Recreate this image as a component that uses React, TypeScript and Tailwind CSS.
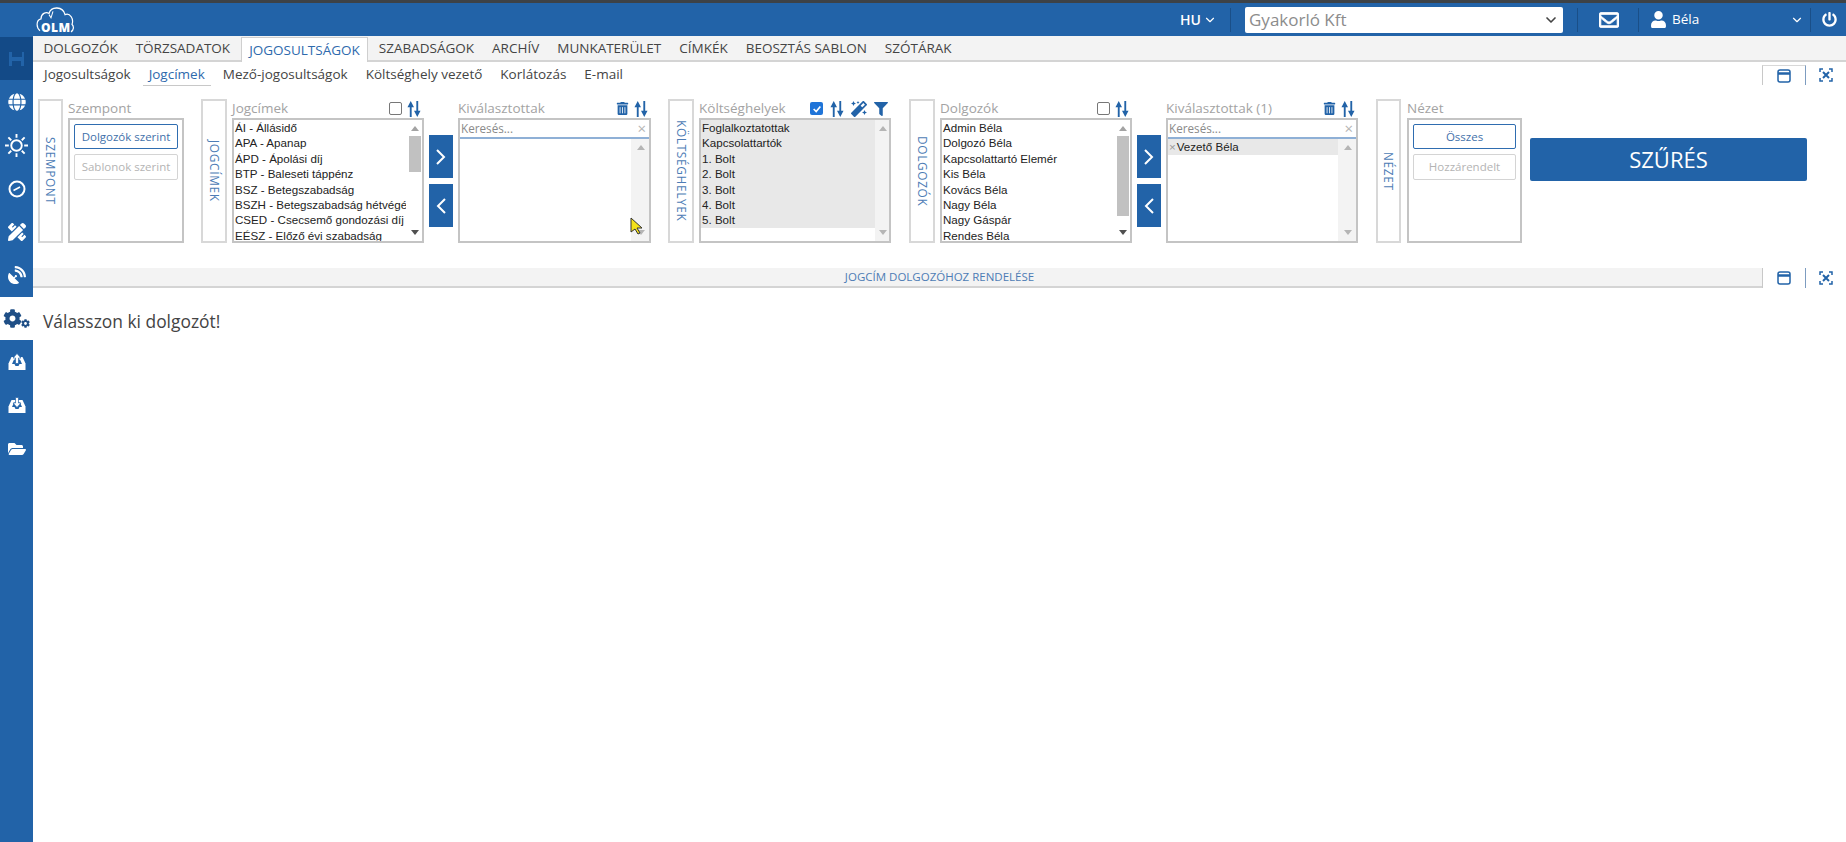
import { FaCog, FaFilter, FaFolderOpen, FaGlobe, FaMagic, FaPencilRuler, FaPowerOff, FaRegEnvelope, FaSatelliteDish, FaTrashAlt, FaUser } from 'react-icons/fa';
import { ChevronDown } from 'lucide-react';
import type { ReactNode } from 'react';

const tabs = ['DOLGOZÓK', 'TÖRZSADATOK', 'JOGOSULTSÁGOK', 'SZABADSÁGOK', 'ARCHÍV', 'MUNKATERÜLET', 'CÍMKÉK', 'BEOSZTÁS SABLON', 'SZÓTÁRAK'];
const subTabs = ['Jogosultságok', 'Jogcímek', 'Mező-jogosultságok', 'Költséghely vezető', 'Korlátozás', 'E-mail'];
const jogcimek = ['ÁI - Állásidő', 'APA - Apanap', 'ÁPD - Ápolási díj', 'BTP - Baleseti táppénz', 'BSZ - Betegszabadság', 'BSZH - Betegszabadság hétvégé', 'CSED - Csecsemő gondozási díj', 'EÉSZ - Előző évi szabadság'];
const koltseg = ['Foglalkoztatottak', 'Kapcsolattartók', '1. Bolt', '2. Bolt', '3. Bolt', '4. Bolt', '5. Bolt'];
const dolgozok = ['Admin Béla', 'Dolgozó Béla', 'Kapcsolattartó Elemér', 'Kis Béla', 'Kovács Béla', 'Nagy Béla', 'Nagy Gáspár', 'Rendes Béla'];

function SortIcon() {
  return (
    <svg viewBox="0 0 15 17" className="w-[14px] h-[16px] text-[#2263a8]" fill="currentColor">
      <path d="M3 6h2v11H3zM4 0l3.500 6.500h-7zM10 0h2v11h-2zM11 17l-3.500-6.500h7z" />
    </svg>
  );
}

function InboxIcon({ up }: { up?: boolean }) {
  return (
    <svg viewBox="0 0 18 18" className="w-[18px] h-[18px]">
      <path d="M3.500 4h11l3 6.500V17H.5v-6.500z" fill="#fff" />
      <path d="M6 6.500h6l2 4.500h-2.500l-1 2h-3l-1-2H4z" fill="#2263a8" />
      {up
        ? <path d="M9 .5l4 4.500h-2.500v5.500h-3V5H5z" fill="#fff" stroke="#2263a8" strokeWidth="0.700" />
        : <path d="M7.500 1.500h3V7H13l-4 4.500L5 7h2.500z" fill="#fff" stroke="#2263a8" strokeWidth="0.700" />}
    </svg>
  );
}

function ClockIcon() {
  return (
    <svg viewBox="0 0 18 18" className="w-[18px] h-[18px] text-white" fill="none" stroke="currentColor" strokeWidth="2">
      <circle cx="9" cy="9" r="7.500" />
      <path d="M5.500 10.500 12 7" strokeWidth="1.600" />
    </svg>
  );
}

function SunIcon() {
  return (
    <svg viewBox="0 0 24 24" className="w-[23px] h-[23px] text-white" fill="none" stroke="currentColor" strokeWidth="2">
      <circle cx="12" cy="12" r="5.500" />
      <path d="M12 0v4M12 20v4M0 12h4M20 12h4M3.500 3.500l3 3M17.500 17.500l3 3M3.500 20.500l3-3M17.500 6.500l3-3" />
    </svg>
  );
}

function CogsIcon() {
  return (
    <div className="flex items-end text-[#1f4f86] -ml-[1px]">
      <FaCog size={19} />
      <FaCog size={9} className="-ml-[1px]" />
    </div>
  );
}

function SaveIcon() {
  return (
    <svg viewBox="0 0 20 20" className="w-[20px] h-[20px] text-[#2263a8]" fill="currentColor">
      <path d="M2 3h3v5h10V3h2v14h-3v-5H5v5H2z" />
    </svg>
  );
}

function WindowIcon() {
  return (
    <svg viewBox="0 0 14 14" className="w-[14px] h-[14px] text-[#2263a8]" fill="none" stroke="currentColor" strokeWidth="1.500">
      <rect x="1" y="1" width="12" height="12" rx="2" />
      <path d="M1 4.500h12" strokeWidth="2.500" />
    </svg>
  );
}

function ExpandIcon() {
  return (
    <svg viewBox="0 0 14 14" className="w-[14px] h-[14px] text-[#2263a8]" fill="none" stroke="currentColor" strokeWidth="1.500">
      <path d="M1 4V1h3M10 1h3v3M13 10v3h-3M4 13H1v-3" />
      <path d="M4 4l6 6M10 4l-6 6" strokeWidth="2" />
    </svg>
  );
}

function Chevron({ left }: { left?: boolean }) {
  return (
    <svg viewBox="0 0 10 16" className="w-[10px] h-[16px]" fill="none" stroke="white" strokeWidth="2">
      <path d={left ? 'M9 1 2 8l7 7' : 'M1 1l7 7-7 7'} />
    </svg>
  );
}

function Logo() {
  return (
    <div className="relative w-[38px] h-[28px] text-white">
      <svg viewBox="0 0 38 26" preserveAspectRatio="none" className="w-[38px] h-[28px]" fill="none" stroke="currentColor" strokeWidth="1.200">
        <path d="M4 23C0 20 0 13 5 12 5 7 10 5 13 7 15 0 27 0 29 8 34 6 38 12 36 17 38 19 38 22 35 24" />
        <path d="M11 6l2 3 2-6" strokeWidth="1" transform="translate(2 2)" />
      </svg>
      <span className="absolute left-[5px] top-[16px] text-[12px] leading-[12px] font-extrabold tracking-[0.5px]">OLM</span>
    </div>
  );
}

function SideLabel({ text, width = 'w-[26px]' }: { text: string; width?: string }) {
  return (
    <div className={`${width} h-[144px] shrink-0 border-2 border-[#d8d8d8] flex items-center justify-center bg-white`}>
      <span className="[writing-mode:vertical-rl] text-[11.800px] tracking-[0.7px] text-[#4d7cb5]">{text}</span>
    </div>
  );
}

function Heading({ title, gap = 'gap-[5px]', children }: { title: string; gap?: string; children?: ReactNode }) {
  return (
    <div className="h-[19px] flex items-center justify-between pr-[3px]">
      <span className="text-[13.500px] leading-[19px] text-[#a3a3a3]">{title}</span>
      <div className={`flex items-center ${gap}`}>{children}</div>
    </div>
  );
}

function Checkbox({ checked }: { checked?: boolean }) {
  if (checked) {
    return (
      <span className="w-[13px] h-[13px] rounded-[2px] bg-[#1f74d8] flex items-center justify-center">
        <svg viewBox="0 0 12 12" className="w-[10px] h-[10px]" fill="none" stroke="white" strokeWidth="2"><path d="M2 6l3 3 5-6" /></svg>
      </span>
    );
  }
  return <span className="w-[13px] h-[13px] rounded-[2px] border border-[#777] bg-white" />;
}

function Scroll({ thumb, width = 'w-[16px]', light }: { thumb?: string; width?: string; light?: boolean }) {
  return (
    <div className={`${width} shrink-0 flex flex-col items-center justify-between pl-[3px] pr-[1px] py-[6px] ${light ? 'bg-[#f3f3f3]' : 'bg-white'}`}>
      <span className={`w-0 h-0 border-x-[4px] border-x-transparent border-b-[5px] ${thumb ? 'border-b-[#a3a3a3]' : 'border-b-[#b5b5b5]'}`} />
      {thumb && <div className={`${thumb} w-[12px] bg-[#c1c1c1]`} />}
      <span className={`w-0 h-0 border-x-[4px] border-x-transparent border-t-[5px] ${thumb ? 'border-t-[#505050]' : 'border-t-[#b5b5b5]'}`} />
    </div>
  );
}

function ListBox({ items, thumb, grey }: { items: string[]; thumb?: string; grey?: boolean }) {
  return (
    <div className="h-[125px] border-2 border-[#c4c4c4] flex overflow-hidden bg-white">
      <div className="flex-1 min-w-0 font-['Liberation_Sans',sans-serif] text-[11.600px] text-[#222]">
        {items.map((item) => (
          <div key={item} className={`h-[15.400px] leading-[15.400px] pl-[1px] whitespace-nowrap overflow-hidden ${grey ? 'bg-[#e8e8e8]' : ''}`}>{item}</div>
        ))}
      </div>
      <Scroll thumb={thumb} width={grey ? 'w-[14px]' : 'w-[16px]'} light={grey} />
    </div>
  );
}

function SearchList({ chip }: { chip?: string }) {
  return (
    <div className="h-[125px] border-2 border-[#c4c4c4] flex flex-col bg-white">
      <div className="h-[19px] shrink-0 border-b-2 border-[#8fb0d6] flex items-center justify-between pl-[1px] pr-[3px] text-[11.700px] text-[#8a8a8a]">
        <span>Keresés...</span>
        <span className="text-[15px] leading-none text-[#b5b5b5]">×</span>
      </div>
      <div className="flex-1 flex min-h-0">
        <div className="flex-1 min-w-0">
          {chip && (
            <div className="h-[16px] bg-[#e8e8e8] flex items-center font-['Liberation_Sans',sans-serif] text-[11.600px] text-[#222]">
              <span className="px-[1px] text-[#999] leading-none">×</span>{chip}
            </div>
          )}
        </div>
        <Scroll width="w-[18px]" light />
      </div>
    </div>
  );
}

function ArrowButtons() {
  return (
    <div className="w-[24px] shrink-0 h-[144px] pt-[36px] flex flex-col gap-[6px]">
      <button className="h-[43px] bg-[#2263a8] flex items-center justify-center"><Chevron /></button>
      <button className="h-[43px] bg-[#2263a8] flex items-center justify-center"><Chevron left /></button>
    </div>
  );
}

function OptionPanel({ title, first, second, width }: { title: string; first: string; second: string; width: string }) {
  return (
    <div className={width}>
      <Heading title={title} />
      <div className="h-[125px] border-2 border-[#c4c4c4] px-[4px] pt-[4px] flex flex-col gap-[5px]">
        <div className="h-[25px] border-[1.500px] border-[#2f6db0] rounded-[2px] flex items-center justify-center text-[11.500px] text-[#3f71aa]">{first}</div>
        <div className="h-[26px] border-[1.500px] border-[#d4d4d4] rounded-[2px] flex items-center justify-center text-[11.500px] text-[#b4b4b4]">{second}</div>
      </div>
    </div>
  );
}

function PanelTools({ top }: { top?: boolean }) {
  return (
    <div className={`flex h-[20px] shrink-0 bg-white ${top ? 'mt-[3px]' : ''}`}>
      <div className={`w-[44px] flex items-center justify-center border-l border-r border-l-[#c8c8c8] border-r-[#7d9cc0] ${top ? 'border-t border-t-[#d8d8d8]' : ''}`}><WindowIcon /></div>
      <div className="w-[40px] flex items-center justify-center"><ExpandIcon /></div>
    </div>
  );
}

export default function App() {
  const side = [
    { icon: <SaveIcon />, cls: 'bg-[#134a87]' },
    { icon: <FaGlobe size={18} className="text-white" /> },
    { icon: <SunIcon /> },
    { icon: <ClockIcon /> },
    { icon: <FaPencilRuler size={18} className="text-white" /> },
    { icon: <FaSatelliteDish size={18} className="text-white" /> },
    { icon: <CogsIcon />, cls: 'bg-white' },
    { icon: <InboxIcon up /> },
    { icon: <InboxIcon /> },
    { icon: <FaFolderOpen size={18} className="text-white" /> },
  ];

  return (
    <div className="w-[1846px] h-[842px] overflow-hidden flex flex-col bg-white font-['Open_Sans',sans-serif] relative">
      <div className="h-[3px] bg-[#3d4247] shrink-0" />

      {/* header */}
      <header className="h-[33px] shrink-0 bg-[#2263a8] flex items-center text-white">
        <div className="ml-[36px]"><Logo /></div>
        <div className="ml-auto flex items-center h-full">
          <span className="text-[14px] font-semibold">HU</span>
          <ChevronDown size={14} className="ml-[2px]" />
          <div className="ml-[13px] w-px h-[24px] bg-[#1a4f88]" />
          <div className="ml-[14px] w-[318px] h-[26px] bg-white rounded-[2px] flex items-center justify-between pl-[4px] pr-[4px] text-[17px] text-[#8c8c8c]">
            <span>Gyakorló Kft</span>
            <ChevronDown size={16} strokeWidth={2.500} className="text-[#444]" />
          </div>
          <div className="ml-[14px] w-px h-[24px] bg-[#1a4f88]" />
          <FaRegEnvelope size={20} stroke="currentColor" strokeWidth={20} className="ml-[21px]" />
          <div className="ml-[19px] w-px h-[24px] bg-[#1a4f88]" />
          <FaUser size={17} className="ml-[11px]" />
          <span className="ml-[5px] text-[13.500px] w-[118px]">Béla</span>
          <ChevronDown size={14} />
          <div className="ml-[6px] w-px h-[24px] bg-[#1a4f88]" />
          <FaPowerOff size={15} className="ml-[11px] mr-[9px]" />
        </div>
      </header>

      <div className="flex-1 flex min-h-0">
        {/* sidebar */}
        <aside className="w-[33px] shrink-0 bg-[#2263a8] pt-[1px]">
          {side.map((item, i) => (
            <div key={i} className={`h-[43.330px] flex items-center justify-center ${item.cls ?? ''}`}>{item.icon}</div>
          ))}
        </aside>

        <main className="flex-1 min-w-0 flex flex-col">
          {/* tabs */}
          <div className="h-[26px] shrink-0 bg-[#f3f3f3] border-b-2 border-[#d4d4d4] flex items-end pl-[1.500px] text-[13.500px] text-[#444]">
            {tabs.map((tab) => (
              <div key={tab} className={tab === 'JOGOSULTSÁGOK' ? 'h-[25px] -mb-[2px] px-[7px] mx-[2px] bg-white border border-b-0 border-[#cfcfcf] text-[#2e6aad] leading-[24px]' : 'h-[24px] px-[9px] leading-[24px]'}>{tab}</div>
            ))}
          </div>

          {/* sub tabs */}
          <div className="h-[25px] shrink-0 flex pl-[11px] justify-between">
            <div className="flex gap-[18px] text-[13.500px] text-[#444] pt-[2px]">
              {subTabs.map((t) => (
                <div key={t} className={t === 'Jogcímek' ? 'h-[22px] px-[6px] -mx-[6px] text-[#2e6aad] border-b border-[#c8c8c8]' : ''}>{t}</div>
              ))}
            </div>
            <PanelTools top />
          </div>

          {/* filters */}
          <div className="h-[144px] mt-[12px] shrink-0 flex pl-[5px]">
            <SideLabel text="SZEMPONT" width="w-[25px]" />
            <OptionPanel title="Szempont" first="Dolgozók szerint" second="Sablonok szerint" width="ml-[5px] w-[116px]" />

            <div className="ml-[17px]"><SideLabel text="JOGCÍMEK" /></div>
            <div className="ml-[5px] w-[192px]">
              <Heading title="Jogcímek"><Checkbox /><SortIcon /></Heading>
              <ListBox items={jogcimek} thumb="h-[36px] mt-[5px] mb-auto" />
            </div>
            <div className="ml-[5px]"><ArrowButtons /></div>
            <div className="ml-[5px] w-[193px]">
              <Heading title="Kiválasztottak"><FaTrashAlt size={13} className="text-[#2263a8]" /><SortIcon /></Heading>
              <SearchList />
            </div>

            <div className="ml-[17px]"><SideLabel text="KÖLTSÉGHELYEK" /></div>
            <div className="ml-[5px] w-[192px]">
              <Heading title="Költséghelyek" gap="gap-[7px]">
                <Checkbox checked /><SortIcon /><FaMagic size={16} className="text-[#2263a8]" /><FaFilter size={14} className="text-[#2263a8]" />
              </Heading>
              <ListBox items={koltseg} grey />
            </div>

            <div className="ml-[18px]"><SideLabel text="DOLGOZÓK" /></div>
            <div className="ml-[5px] w-[192px]">
              <Heading title="Dolgozók"><Checkbox /><SortIcon /></Heading>
              <ListBox items={dolgozok} thumb="h-[80px] mt-[5px] mb-auto" />
            </div>
            <div className="ml-[5px]"><ArrowButtons /></div>
            <div className="ml-[5px] w-[192px]">
              <Heading title="Kiválasztottak (1)"><FaTrashAlt size={13} className="text-[#2263a8]" /><SortIcon /></Heading>
              <SearchList chip="Vezető Béla" />
            </div>

            <div className="ml-[18px]"><SideLabel text="NÉZET" width="w-[25px]" /></div>
            <OptionPanel title="Nézet" first="Összes" second="Hozzárendelt" width="ml-[6px] w-[115px]" />

            <button className="ml-[8px] mt-[39px] w-[277px] h-[43px] bg-[#2263a8] rounded-[2px] text-white text-[22px]">SZŰRÉS</button>
          </div>

          {/* section bar */}
          <div className="h-[20px] mt-[25px] shrink-0 bg-[#f3f3f3] border-b-2 border-[#d4d4d4] flex pl-[84px]">
            <div className="flex-1 text-center text-[11.500px] leading-[18px] text-[#4d7cb5]">JOGCÍM DOLGOZÓHOZ RENDELÉSE</div>
            <PanelTools />
          </div>

          <div className="pl-[10px] pt-[20px] text-[17.400px] text-[#444]">Válasszon ki dolgozót!</div>
        </main>
      </div>

      {/* mouse cursor */}
      <svg viewBox="0 0 14 18" className="absolute left-[630px] top-[217px] w-[14px] h-[18px]">
        <path d="M1 1v14l4-3 3 5 2-1-3-5h5z" fill="#f4e21a" stroke="#333" strokeWidth="1" />
      </svg>
    </div>
  );
}
